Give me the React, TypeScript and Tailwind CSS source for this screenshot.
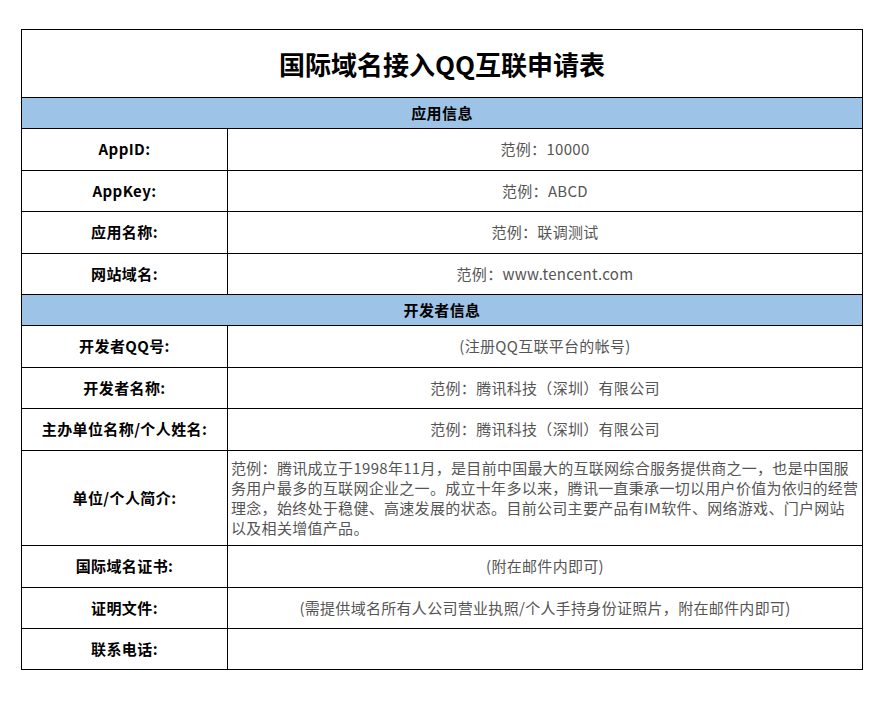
export default function App() {
  const font = { fontFamily: '"Noto Sans CJK SC", "Open Sans", sans-serif' };
  const Row = ({ label, value, h, left }: { label: string; value: string; h: string; left?: boolean }) => (
    <div className={`flex border-t border-black ${h}`}>
      <div className="w-[206px] shrink-0 border-r border-black flex items-center justify-center font-bold text-[15px] tracking-[0.4px] text-black">{label}</div>
      <div className={`flex-1 flex items-center text-[15px] tracking-[0.3px] text-[#555] ${left ? "justify-start px-[3px] leading-[20px]" : "justify-center"}`}>{value}</div>
    </div>
  );
  const Head = ({ t }: { t: string }) => (
    <div className="border-t border-black h-[31px] bg-[#9dc3e6] flex items-center justify-center font-bold text-[15px] tracking-[0.4px] text-black">{t}</div>
  );
  return (
    <div className="w-[891px] h-[710px] bg-white pt-[29px] pl-[21px]" style={font}>
      <div className="w-[842px] border border-black">
        <div className="h-[67px] flex items-center justify-center font-bold text-[26px] text-black">国际域名接入QQ互联申请表</div>
        <Head t="应用信息" />
        <Row label="AppID:" value="范例：10000" h="h-[42px]" />
        <Row label="AppKey:" value="范例：ABCD" h="h-[41px]" />
        <Row label="应用名称:" value="范例：联调测试" h="h-[42px]" />
        <Row label="网站域名:" value="范例：www.tencent.com" h="h-[41px]" />
        <Head t="开发者信息" />
        <Row label="开发者QQ号:" value="(注册QQ互联平台的帐号)" h="h-[42px]" />
        <Row label="开发者名称:" value="范例：腾讯科技（深圳）有限公司" h="h-[41px]" />
        <Row label="主办单位名称/个人姓名:" value="范例：腾讯科技（深圳）有限公司" h="h-[42px]" />
        <Row label="单位/个人简介:" value="范例：腾讯成立于1998年11月，是目前中国最大的互联网综合服务提供商之一，也是中国服务用户最多的互联网企业之一。成立十年多以来，腾讯一直秉承一切以用户价值为依归的经营理念，始终处于稳健、高速发展的状态。目前公司主要产品有IM软件、网络游戏、门户网站以及相关增值产品。" h="h-[95px]" left />
        <Row label="国际域名证书:" value="(附在邮件内即可)" h="h-[42px]" />
        <Row label="证明文件:" value="(需提供域名所有人公司营业执照/个人手持身份证照片，附在邮件内即可)" h="h-[41px]" />
        <Row label="联系电话:" value="" h="h-[41px]" />
      </div>
    </div>
  );
}
